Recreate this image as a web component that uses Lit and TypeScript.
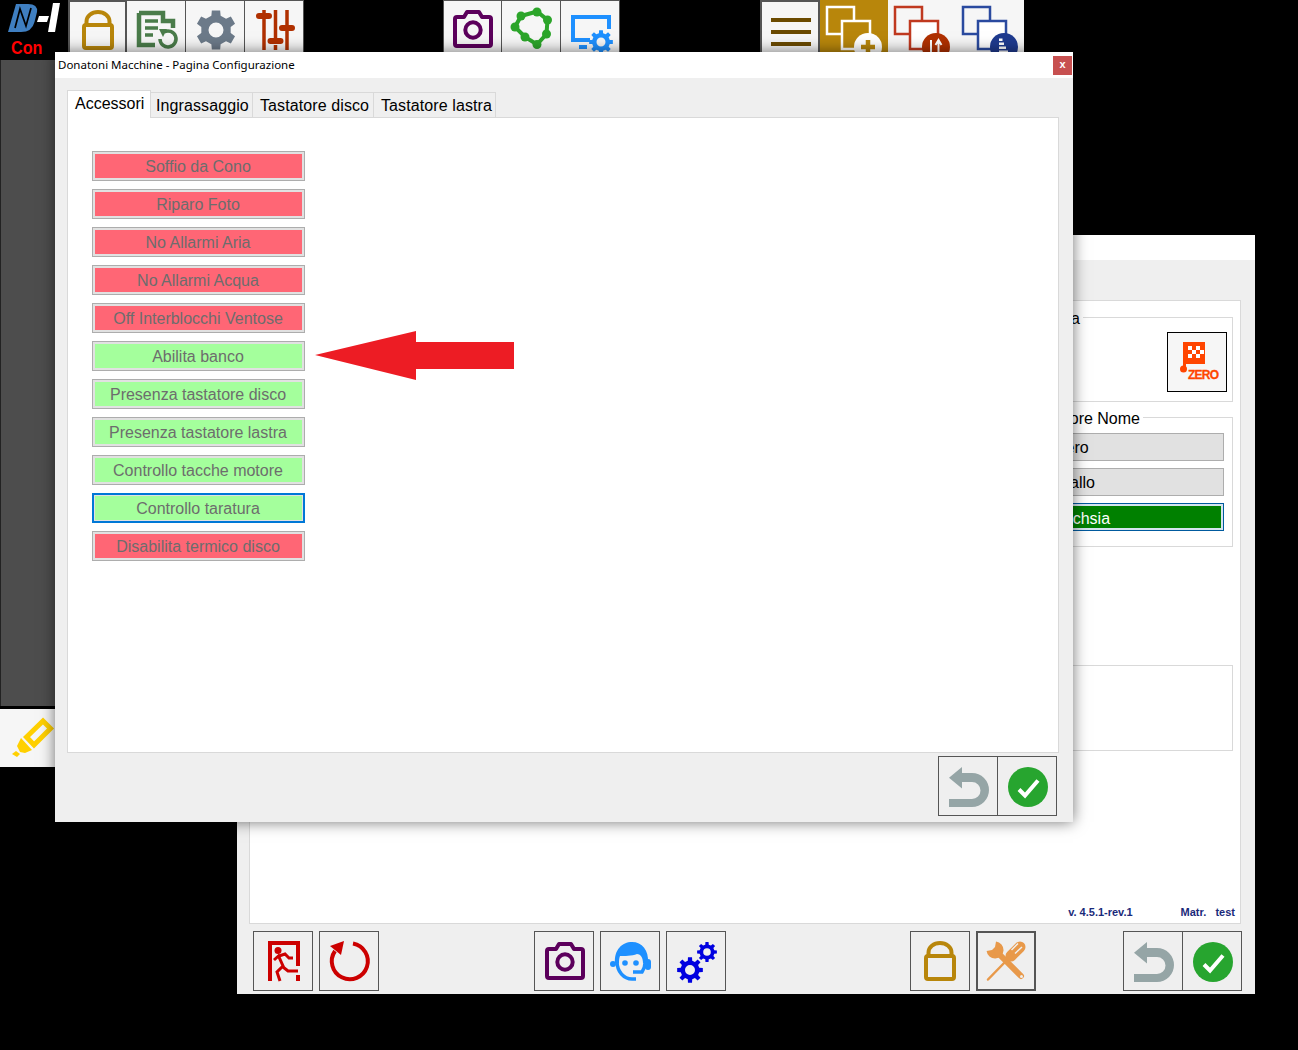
import { LitElement, html, css, svg } from 'lit';
import { customElement } from 'lit/decorators.js';

// builds a cog outline with a round hole, fill-rule evenodd
const gear = (cx: number, cy: number, ro: number, ri: number, hole: number, n: number, start = 0) => {
  const pts: string[] = [];
  const step = (Math.PI * 2) / n;
  for (let i = 0; i < n; i++) {
    const a = start + i * step - Math.PI / 2;
    const w = step * 0.2;
    const g = step * 0.3;
    [[a - g, ri], [a - w, ro], [a + w, ro], [a + g, ri]].forEach(([t, r]) => {
      pts.push(`${(cx + Math.cos(t) * r).toFixed(2)} ${(cy + Math.sin(t) * r).toFixed(2)}`);
    });
  }
  return `M${pts.join('L')}Z M${cx - hole} ${cy}a${hole} ${hole} 0 1 0 ${hole * 2} 0a${hole} ${hole} 0 1 0 ${-hole * 2} 0Z`;
};

const icon = (body: unknown) => html`<svg class="ico" viewBox="0 0 40 40" width="40" height="40">${body}</svg>`;

const lock = icon(svg`
  <path d="M8.5 15V11.5a11.5 9.5 0 0 1 23 0V15" fill="none" stroke="#b8860b" stroke-width="4"/>
  <rect x="6" y="15" width="28" height="23" rx="2" fill="none" stroke="#b8860b" stroke-width="4"/>`);

const camera = icon(svg`
  <path d="M4 8H11L14 3H26L29 8H36Q38 8 38 10V35Q38 37 36 37H4Q2 37 2 35V10Q2 8 4 8Z" fill="none" stroke="#5c005c" stroke-width="4" stroke-linejoin="round"/>
  <circle cx="20" cy="21" r="7.7" fill="none" stroke="#5c005c" stroke-width="4"/>`);

const back = icon(svg`<path d="M0 10.7L13 0V6H23A17 17 0 0 1 23 40H0V32H23A8.5 8.5 0 0 0 23 15H13V21.5Z" fill="#95a5a6"/>`);

const ok = icon(svg`
  <circle cx="20" cy="20" r="20" fill="#27a52f"/>
  <path d="M11 22.5L17 28.500L30 13.500" fill="none" stroke="#fff" stroke-width="4"/>`);

const recap = icon(svg`
  <path d="M2 4H26V12H36V19M2 4V36H18" fill="none" stroke="#4a7c4a" stroke-width="4.500"/>
  <path d="M8 12H21M8 19H21M8 26H16" stroke="#4a7c4a" stroke-width="3.500"/>
  <path d="M23 30a8 8 0 1 0 4-7" fill="none" stroke="#4a7c4a" stroke-width="3.500"/>
  <path d="M22 20L30 20L26 28Z" fill="#4a7c4a"/>`);

const cog = icon(svg`<path d="${gear(20, 21, 20, 15, 7.500, 6)}" fill="#6c7a89" fill-rule="evenodd"/>`);

const sliders = icon(svg`
  <g stroke="#b03000" stroke-width="3.500">
    <path d="M9 1V41M32 1V41M20.500 1V30M20.500 36V41"/>
    <path d="M4 7H14M27 19H37M15.500 32H25.500" stroke-width="6" stroke-linecap="round"/>
  </g>`);

const poly = icon(svg`
  <g fill="#2ca52a">
    <path d="M9 7L25 2.500L35.500 11L34.500 25L25 35.500L13 28L3 18Z" fill="none" stroke="#2ca52a" stroke-width="4"/>
    <circle cx="9" cy="7" r="4.500"/><circle cx="25" cy="3" r="4.500"/><circle cx="35.500" cy="11" r="4.500"/>
    <circle cx="34.500" cy="25" r="4.500"/><circle cx="25" cy="35.500" r="4.500"/><circle cx="13" cy="28" r="4.500"/><circle cx="3" cy="18" r="4.500"/>
  </g>`);

const screenCog = icon(svg`
  <path d="M38 20V8H2V31H19" fill="none" stroke="#1e90ff" stroke-width="4"/>
  <rect x="8" y="36" width="8" height="4" fill="#1e90ff"/>
  <path d="${gear(30, 33, 12, 9, 4.500, 8)}" fill="#1e90ff" fill-rule="evenodd"/>`);

const burger = icon(svg`<path d="M0 10H40M0 22H40M0 34H40" stroke="#6b4a00" stroke-width="4"/>`);

const copies = (line: string, fill: string, disc: string, mark: unknown) => html`
  <svg class="ico-wide" viewBox="0 0 64 56" width="64" height="56">
    <rect x="3" y="3" width="27" height="27" fill="none" stroke="${line}" stroke-width="2.500"/>
    <rect x="18" y="17" width="28" height="28" fill="${fill}" stroke="${line}" stroke-width="2.500"/>
    <circle cx="44" cy="43" r="14" fill="${disc}"/>
    ${mark}
  </svg>`;

const exit = icon(svg`
  <g fill="#cc0000">
    <path d="M5 0H37V25H33V4H9V40H5Z"/>
    <rect x="33" y="34" width="4" height="6"/>
    <circle cx="15" cy="9.500" r="3.500"/>
  </g>
  <g fill="none" stroke="#cc0000" stroke-width="3">
    <path d="M11 19L15.500 15L20 25L14 31L17 40"/>
    <path d="M16 15L22 13L26 17H30"/>
    <path d="M20 26L25 30H35"/>
  </g>`);

const replay = icon(svg`
  <path d="M24 2.500A18 18 0 1 1 6 10" fill="none" stroke="#cc0000" stroke-width="4"/>
  <path d="M1 5L15 0L12 14Z" fill="#cc0000"/>`);

const agent = icon(svg`
  <path d="M5 22C4 9 12 1 22 1S39 9 38 22H33C33 16 30 13 27 13C22 15 14 15 10 15C9 17 9 20 9 22Z" fill="#1e90ff"/>
  <path d="M7 20C7 31 14 38 22 38H26" fill="none" stroke="#1e90ff" stroke-width="3.500"/>
  <path d="M35 22C35 26 34 28 32 31H23" fill="none" stroke="#1e90ff" stroke-width="3.500"/>
  <rect x="35" y="18" width="6" height="11" rx="3" fill="#1e90ff"/>
  <circle cx="3" cy="23" r="3" fill="#1e90ff"/>
  <circle cx="15" cy="22" r="2.800" fill="#1e90ff"/><circle cx="26" cy="22" r="2.800" fill="#1e90ff"/>`);

const gears = icon(svg`
  <path d="${gear(14, 29, 13, 9.500, 5, 8)}" fill="#0000e0" fill-rule="evenodd"/>
  <path d="${gear(31, 11, 10, 7.500, 3.800, 8)}" fill="#0000e0" fill-rule="evenodd"/>`);

const tools = icon(svg`
  <g fill="#e8994a">
    <path d="M10 .6A8.500 8.500 0 1 1 .6 10L6 9 9 6Z"/>
  </g>
  <path d="M11 11L35 35" stroke="#e8994a" stroke-width="6" stroke-linecap="round"/>
  <circle cx="35.500" cy="35.500" r="1.500" fill="#efefef"/>
  <path d="M2 38.500L22 18" stroke="#e8994a" stroke-width="2.500" stroke-linecap="round"/>
  <path d="M25 15L34 6" stroke="#e8994a" stroke-width="11" stroke-linecap="round"/>
  <path d="M25.500 9L32 2.500M29 12.500L36 6" stroke="#efefef" stroke-width="1.500"/>`);

const marker = icon(svg`
  <path d="M31 3L38.500 10.500L22 27L14.500 19Z" fill="none" stroke="#ffd000" stroke-width="5"/>
  <path d="M9 20L20 32L13 35L8 34L5 28Z" fill="#ffd000"/>
  <path d="M0 36L4 33L8 36L5 39Z" fill="#ffd000"/>`);

const buttons = [
  ['Soffio da Cono', 'off'],
  ['Riparo Foto', 'off'],
  ['No Allarmi Aria', 'off'],
  ['No Allarmi Acqua', 'off'],
  ['Off Interblocchi Ventose', 'off'],
  ['Abilita banco', 'on'],
  ['Presenza tastatore disco', 'on'],
  ['Presenza tastatore lastra', 'on'],
  ['Controllo tacche motore', 'on'],
  ['Controllo taratura', 'on focus'],
  ['Disabilita termico disco', 'off'],
];

@customElement('app-root')
export class AppRoot extends LitElement {
  static styles = css`
    :host {
      display: block;
      position: relative;
      width: 1298px;
      height: 1050px;
      background: #000;
      overflow: hidden;
      font-family: 'Liberation Sans', Arial, sans-serif;
      font-size: 16px;
      color: #000;
    }
    svg { display: block; overflow: visible; }

    /* top toolbar */
    .topbar { display: flex; height: 58px; }
    .logo { width: 68px; flex: none; position: relative; }
    .logo svg { margin: 3px 0 0 8px; }
    .logo span {
      display: block;
      margin: 5px 0 0 11px;
      width: 31px;
      color: #f00;
      font: bold 19px/19px 'Liberation Sans', sans-serif;
      transform: scaleX(.85);
      transform-origin: left;
    }
    .tb { width: 59px; flex: none; box-sizing: border-box; background: #f6f6f6; border: 1px solid #555; display: flex; align-items: center; justify-content: center; }
    .tb + .tb { border-left: 0; }
    .tb + .tb svg { margin-left: 2px; }
    .tb.active { border-width: 2px; border-color: #555; border-bottom: 0; }
    .group-mid { margin-left: 139px; display: flex; }
    .group-right { margin-left: 140px; display: flex; }
    .group-right .tb { width: 60px; }
    .group-right .tb svg { margin-left: 2px; }
    .wide { width: 68px; flex: none; background: #f6f6f6; padding: 4px 0 0 4px; box-sizing: border-box; }
    .wide.gold { background: #b8860b; }

    /* left rail */
    .rail { width: 55px; height: 646px; margin-top: 2px; box-sizing: border-box; background: #4d4d4d; border-left: 1px solid #222; }
    .mark { width: 55px; height: 58px; margin-top: 3px; background: #f6f6f6; display: flex; align-items: center; padding-left: 12px; box-sizing: border-box; }

    /* windows */
    .win { position: absolute; display: flex; flex-direction: column; box-sizing: border-box; background: #efefef; }
    .win-back { left: 237px; top: 235px; width: 1018px; height: 759px; }
    .win-dialog { left: 55px; top: 52px; width: 1018px; height: 770px; box-shadow: 0 0 14px rgba(0, 0, 0, .55); }
    .titlebar { height: 26px; flex: none; background: #fff; display: flex; align-items: center; justify-content: space-between; padding: 0 3px; font: 11.5px 'Noto Sans', sans-serif; }
    .titlebar span { margin-bottom: 2px; }
    .win-back .titlebar { height: 25px; }
    .close { width: 19px; height: 19px; margin: 0 -2px 0 0; background: #c75050; color: #fff; font: bold 11px/17px 'Liberation Sans', sans-serif; text-align: center; }

    .panel { margin: 40px 14px 0 12px; height: 624px; box-sizing: border-box; background: #fff; border: 1px solid #d9d9d9; display: flex; flex-direction: column; align-items: flex-end; padding: 16px 7px 0 0; }
    .group { position: relative; width: 193px; box-sizing: border-box; border: 1px solid #d9d9d9; background: #fff; }
    .legend { position: absolute; top: -8px; background: #fff; padding: 0 3px; line-height: 18px; }
    .g1 { height: 85px; margin-bottom: 15px; display: flex; justify-content: flex-end; padding: 14px 5px 0 0; }
    .g1 .legend { right: 149px; }
    .g2 { height: 130px; padding: 15px 8px 0 0; display: flex; flex-direction: column; align-items: flex-end; gap: 7px; }
    .g2 .legend { right: 89px; }
    .g3 { height: 86px; margin-top: 118px; }
    .zero { width: 60px; height: 60px; box-sizing: border-box; border: 1px solid #000; background: #f6f6f6; }
    .zero text { font: bold 12px 'Liberation Sans', sans-serif; fill: #ff4500; stroke: #ff4500; stroke-width: .3px; }
    .pick { width: 175px; height: 28px; box-sizing: border-box; border: 1px solid #adadad; background: #e1e1e1; line-height: 28px; padding-left: 4px; }
    .pick.sel { border-color: #005a9e; box-shadow: inset 0 0 0 2px #d5e4ef; background: #008000; color: #fff; line-height: 29px; }
    .versions { margin-top: auto; display: flex; gap: 48px; font-size: 11px; font-weight: bold; color: #1a2a7a; line-height: 13px; margin-bottom: 4px; margin-right: -2px; }

    .tools { display: flex; padding: 7px 0 0 16px; }
    .btn { width: 60px; height: 60px; box-sizing: border-box; border: 1px solid #555; display: flex; align-items: center; justify-content: center; flex: none; }
    .btn.thick { border-width: 2px; }
    .btn + .btn { margin-left: 6px; }
    .btn.m1 svg { margin-left: 2px; }
    .btn.pair svg { margin: 2px 0 0 2px; }
    .btn.joined { margin-left: -1px; }
    .tools .m1 { margin-left: 155px; }
    .tools .m2 { margin-left: 184px; }
    .tools .m3 { margin-left: 87px; }

    /* dialog */
    .tabs { display: flex; align-items: flex-end; height: 28px; margin: 12px 0 0 12px; flex: none; position: relative; z-index: 1; }
    .tab { height: 26px; box-sizing: border-box; border: 1px solid #d9d9d9; border-left: 0; line-height: 25px; padding-left: 7px; white-space: nowrap; letter-spacing: .1px; }
    .tab.first { height: 28px; width: 84px; border-left: 1px solid #d9d9d9; border-bottom: 0; background: #fff; line-height: 26px; padding-left: 7px; letter-spacing: 0; }
    .tab.t2 { width: 102px; padding-left: 5px; }
    .tab.t3 { width: 121px; }
    .tab.t4 { width: 122px; }
    .pane { height: 636px; flex: none; margin: -1px 14px 0 12px; box-sizing: border-box; background: #fff; border: 1px solid #d9d9d9; padding: 33px 0 0 24px; display: flex; flex-direction: column; gap: 8px; }
    .toggle { width: 213px; height: 30px; box-sizing: border-box; border: 1px solid #adadad; padding: 2px; background: #e1e1e1; flex: none; }
    .toggle div { height: 24px; line-height: 26px; padding-right: 1px; box-sizing: border-box; text-align: center; color: #6d6d6d; white-space: nowrap; }
    .toggle.off div { background: #ff6675; }
    .toggle.on div { background: #a4ff9c; }
    .toggle.focus { border: 2px solid #0078d7; padding: 1px; }
    .foot { display: flex; justify-content: flex-end; padding: 3px 16px 0 0; }
    .arrow { position: absolute; left: 315px; top: 331px; }
  `;

  render() {
    return html`
      <div class="topbar">
        <div class="logo">
          <svg width="52" height="30" viewBox="0 0 52 30">
            <path d="M8 1H20Q30 1 29 9L26.500 19Q24 29 13 29H0Z" fill="#3f7fc1"/>
            <path d="M7 25L12 6L18 23L23 5" fill="none" stroke="#000" stroke-width="1.700"/>
            <path d="M31 13H41L39 19H29Z" fill="#fff"/>
            <path d="M45 0H52L47 29H40Z" fill="#fff"/>
          </svg>
          <span>Con</span>
        </div>
        <div class="tb active">${lock}</div>
        <div class="tb">${recap}</div>
        <div class="tb">${cog}</div>
        <div class="tb">${sliders}</div>
        <div class="group-mid">
          <div class="tb">${camera}</div>
          <div class="tb">${poly}</div>
          <div class="tb">${screenCog}</div>
        </div>
        <div class="group-right">
          <div class="tb active">${burger}</div>
          <div class="wide gold">
            ${copies('#fff', '#b8860b', '#fff', svg`<path d="M44 36V50M37 43H51" stroke="#b8860b" stroke-width="4.500"/>`)}
          </div>
          <div class="wide">
            ${copies('#c0391f', '#fff', '#b03000', svg`<path d="M39 58V36M46.500 58V36M43.500 41L46.500 36L49.500 41" fill="none" stroke="#fff" stroke-width="2"/>`)}
          </div>
          <div class="wide">
            ${copies('#2a4a9f', '#fff', '#1e3a8f', svg`<path d="M39 34.500h3.500v2.500H39zM39 38.500h5v2.500H39zM39 42.500h7v2.500H39zM39 46.500h9v2.500H39z" fill="#fff"/>`)}
          </div>
        </div>
      </div>
      <div class="rail"></div>
      <div class="mark">${marker}</div>

      <div class="win win-back">
        <div class="titlebar"></div>
        <div class="panel">
          <div class="group g1">
            <span class="legend">Zona</span>
            <div class="zero">
              <svg width="58" height="58" viewBox="0 0 58 58">
                <path d="M15 9H37V31H18V36H15Z" fill="#ff4500"/>
                <path d="M20 13h4v4h-4zM28 13h4v4h-4zM24 17h4v4h-4zM32 17h4v4h-4zM20 21h4v4h-4zM28 21h4v4h-4z" fill="#fff"/>
                <circle cx="15.500" cy="36" r="3.500" fill="#ff4500"/>
                <text x="20" y="46" textLength="31">ZERO</text>
              </svg>
            </div>
          </div>
          <div class="group g2">
            <span class="legend">Colore Nome</span>
            <div class="pick">Nero</div>
            <div class="pick">Giallo</div>
            <div class="pick sel">Fuchsia</div>
          </div>
          <div class="group g3"></div>
          <div class="versions"><span>v. 4.5.1-rev.1</span><span>Matr.&nbsp;&nbsp; test</span></div>
        </div>
        <div class="tools">
          <div class="btn">${exit}</div>
          <div class="btn">${replay}</div>
          <div class="btn m1">${camera}</div>
          <div class="btn">${agent}</div>
          <div class="btn">${gears}</div>
          <div class="btn m2">${lock}</div>
          <div class="btn thick">${tools}</div>
          <div class="btn pair m3">${back}</div>
          <div class="btn pair joined">${ok}</div>
        </div>
      </div>

      <div class="win win-dialog">
        <div class="titlebar">
          <span>Donatoni Macchine - Pagina Configurazione</span>
          <div class="close">x</div>
        </div>
        <div class="tabs">
          <div class="tab first">Accessori</div>
          <div class="tab t2">Ingrassaggio</div>
          <div class="tab t3">Tastatore disco</div>
          <div class="tab t4">Tastatore lastra</div>
        </div>
        <div class="pane">
          ${buttons.map(([label, state]) => html`<div class="toggle ${state}"><div>${label}</div></div>`)}
        </div>
        <div class="foot">
          <div class="btn pair">${back}</div>
          <div class="btn pair joined">${ok}</div>
        </div>
      </div>

      <svg class="arrow" width="199" height="49" viewBox="0 0 199 49">
        <path d="M0 24L101 0V11H199V38H101V49Z" fill="#ed1c24"/>
      </svg>
    `;
  }
}
